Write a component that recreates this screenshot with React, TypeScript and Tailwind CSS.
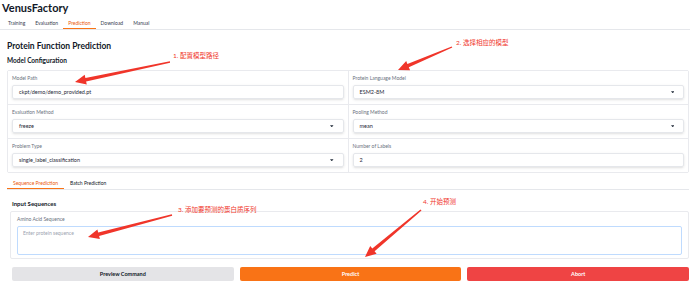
import React from "react";

const font = { fontFamily: "Lato, 'Noto Sans CJK SC', sans-serif" };

function arrowPoints(x1: number, y1: number, x2: number, y2: number) {
  const dx = x2 - x1;
  const dy = y2 - y1;
  const len = Math.sqrt(dx * dx + dy * dy);
  const ux = dx / len;
  const uy = dy / len;
  const nx = -uy;
  const ny = ux;
  const headLen = 11;
  const headW = 5;
  const bx = x2 - ux * headLen;
  const by = y2 - uy * headLen;
  const p = (x: number, y: number) => `${x.toFixed(1)},${y.toFixed(1)}`;
  return [
    p(x1 + nx * 0.7, y1 + ny * 0.7),
    p(bx + nx * 1.8, by + ny * 1.8),
    p(bx + nx * headW, by + ny * headW),
    p(x2, y2),
    p(bx - nx * headW, by - ny * headW),
    p(bx - nx * 1.8, by - ny * 1.8),
    p(x1 - nx * 0.7, y1 - ny * 0.7),
  ].join(" ");
}

const arrows = [
  [170, 62, 75, 82],
  [452, 47, 398, 70],
  [172, 215, 88, 237],
  [421, 210, 365, 257],
];

function Caret() {
  return (
    <svg width="3.5" height="2.5" viewBox="0 0 5 3" className="shrink-0">
      <path d="M0 0 L5 0 L2.5 3 Z" fill="#1f2937" />
    </svg>
  );
}

function Field({ label, value, select }: { label: string; value: string; select?: boolean }) {
  return (
    <div className="bg-white pt-[4px] pb-[5px] px-[4px]">
      <div className="h-[7px] text-[5px] leading-[7px] text-[#6b7280]">{label}</div>
      <div className="mt-[3px] h-[14px] flex items-center justify-between pl-[6px] pr-[9px] border border-[#e5e7eb] rounded-[2px] shadow-sm text-[5.5px] text-[#1f2937]">
        <span>{value}</span>
        {select && <Caret />}
      </div>
    </div>
  );
}

export default function App() {
  return (
    <div className="relative w-[690px] h-[288px] overflow-hidden bg-white" style={font}>
      <div className="px-[2px] h-[16px] text-[11px] leading-[16px] font-bold text-[#111827]">VenusFactory</div>

      <div className="mt-[1px] flex border-b border-[#e5e7eb] px-[3px] h-[13px] text-[5px] text-[#374151]">
        <div className="px-[5px] leading-[12px]">Training</div>
        <div className="px-[5px] leading-[12px]">Evaluation</div>
        <div className="px-[5px] leading-[12px] text-[#ea580c] border-b-[1.5px] border-[#f97316]">Prediction</div>
        <div className="px-[5px] leading-[12px]">Download</div>
        <div className="px-[5px] leading-[12px]">Manual</div>
      </div>

      <div className="pl-[7px] pr-[1px]">
        <div className="mt-[11px] h-[10px] text-[8.5px] leading-[10px] font-bold text-[#111827]">Protein Function Prediction</div>
        <div className="mt-[6px] h-[8px] text-[6.5px] leading-[8px] font-bold text-[#111827]">Model Configuration</div>

        <div className="mt-[5px] grid grid-cols-2 gap-px bg-[#e9eaee] border border-[#e9eaee] rounded-[2px]">
          <Field label="Model Path" value="ckpt/demo/demo_provided.pt" />
          <Field label="Protein Language Model" value="ESM2-8M" select />
          <Field label="Evaluation Method" value="freeze" select />
          <Field label="Pooling Method" value="mean" select />
          <Field label="Problem Type" value="single_label_classification" select />
          <Field label="Number of Labels" value="2" />
        </div>

        <div className="mt-[4px] flex border-b border-[#e5e7eb] h-[13px] text-[5px]">
          <div className="px-[6px] leading-[12px] text-[#ea580c] border-b-[1.5px] border-[#f97316]">Sequence Prediction</div>
          <div className="px-[6px] leading-[12px] text-[#111827]">Batch Prediction</div>
        </div>

        <div className="pl-[3px]">
          <div className="mt-[10px] pl-[2px] h-[8px] text-[6px] leading-[8px] font-bold text-[#111827]">Input Sequences</div>
          <div className="mt-[3px] border border-[#e9eaee] rounded-[2px] pt-[4px] pb-[3px] px-[6px]">
            <div className="h-[7px] text-[5px] leading-[7px] text-[#6b7280]">Amino Acid Sequence</div>
            <div className="mt-[3px] h-[29px] border border-[#bfdbfe] rounded-[2px] pl-[5px] pt-[3px] text-[5px] text-[#9ca3af]">
              Enter protein sequence
            </div>
          </div>

          <div className="mt-[8px] pl-[2px] flex gap-[6px] h-[14px] text-[5.5px] font-bold">
            <div className="flex-1 flex items-center justify-center rounded-[2px] bg-[#e4e4e7] text-[#111827]">Preview Command</div>
            <div className="flex-1 flex items-center justify-center rounded-[2px] bg-[#f97316] text-white">Predict</div>
            <div className="flex-1 flex items-center justify-center rounded-[2px] bg-[#ef4444] text-white">Abort</div>
          </div>
        </div>
      </div>

      <div className="absolute left-[173px] top-[52px] text-[6.5px] leading-[8px] text-[#f0352a]">1. 配置模型路径</div>
      <div className="absolute left-[456px] top-[39px] text-[6.5px] leading-[8px] text-[#f0352a]">2. 选择相应的模型</div>
      <div className="absolute left-[178px] top-[206px] text-[6.5px] leading-[8px] text-[#f0352a]">3. 添加要预测的蛋白质序列</div>
      <div className="absolute left-[423px] top-[198px] text-[6.5px] leading-[8px] text-[#f0352a]">4. 开始预测</div>

      <svg className="absolute inset-0 pointer-events-none" width="690" height="288">
        {arrows.map(([a, b, c, d], i) => (
          <polygon key={i} points={arrowPoints(a, b, c, d)} fill="#f0352a" />
        ))}
      </svg>
    </div>
  );
}
